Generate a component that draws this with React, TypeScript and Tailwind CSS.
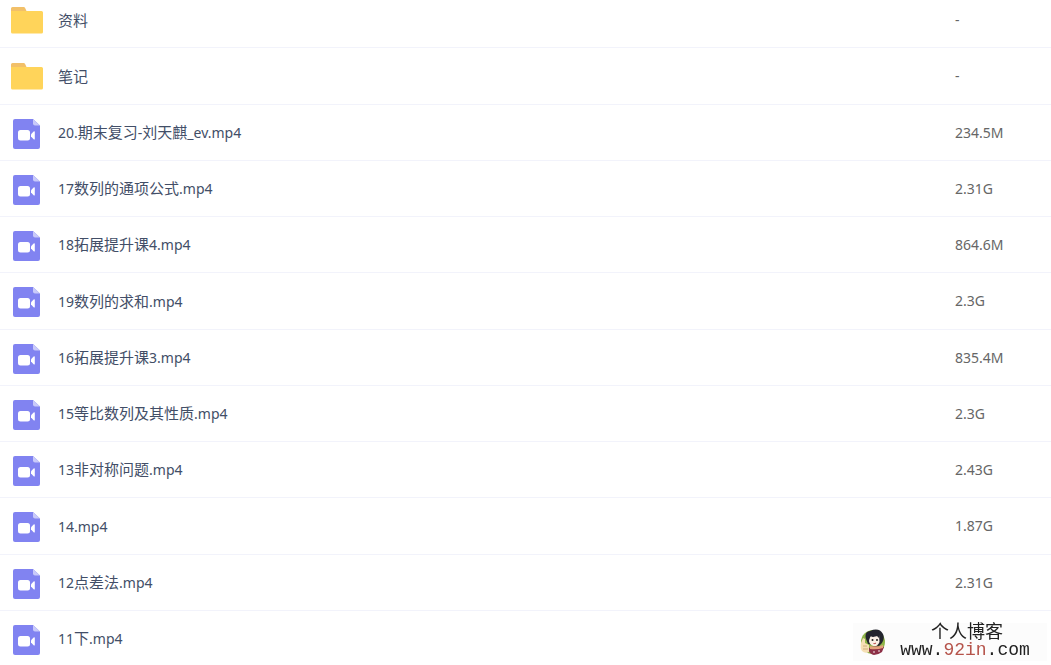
import React from 'react';

type FileItem = {
  name: string;
  size: string;
  folder?: boolean;
};

const files: FileItem[] = [
  { name: '资料', size: '-', folder: true },
  { name: '笔记', size: '-', folder: true },
  { name: '20.期末复习-刘天麒_ev.mp4', size: '234.5M' },
  { name: '17数列的通项公式.mp4', size: '2.31G' },
  { name: '18拓展提升课4.mp4', size: '864.6M' },
  { name: '19数列的求和.mp4', size: '2.3G' },
  { name: '16拓展提升课3.mp4', size: '835.4M' },
  { name: '15等比数列及其性质.mp4', size: '2.3G' },
  { name: '13非对称问题.mp4', size: '2.43G' },
  { name: '14.mp4', size: '1.87G' },
  { name: '12点差法.mp4', size: '2.31G' },
  { name: '11下.mp4', size: '' },
];

const FolderIcon = () => (
  <svg className="h-8 w-8 shrink-0" viewBox="0 0 32 32" aria-hidden="true">
    <path d="M0 10V4.5A1.5 1.5 0 0 1 1.5 3h11.2a1.5 1.5 0 0 1 1.3.8L15.5 7v3z" fill="#f2c069" />
    <path d="M0 7h30.5A1.5 1.5 0 0 1 32 8.5V28a1.5 1.5 0 0 1-1.5 1.5h-29A1.5 1.5 0 0 1 0 28z" fill="#ffd45a" />
  </svg>
);

const VideoIcon = () => (
  <svg className="h-8 w-8 shrink-0" viewBox="0 0 32 32" aria-hidden="true">
    <path d="M4 2h18l7 6.500V30a2 2 0 0 1-2 2H4a2 2 0 0 1-2-2V4a2 2 0 0 1 2-2z" fill="#8183f1" />
    <path d="M22 2l7 6.500h-5a2 2 0 0 1-2-2z" fill="#c9caf9" />
    <rect x="7" y="13" width="12" height="10.5" rx="2.5" fill="#fff" />
    <path d="M20 17.2l2.600-2.700q1.200-.8 1.200.6v6.600q0 1.400-1.200.6L20 19.500z" fill="#fff" />
  </svg>
);

// Latin runs are set one step smaller than the Chinese ones
const FileName = ({ name }: { name: string }) => (
  <>
    {name.split(/([\x20-\x7e]+)/).filter(Boolean).map((part, index) => (
      <span key={index} className={/^[\x20-\x7e]/.test(part) ? 'text-sm' : 'text-[15px]'}>
        {part}
      </span>
    ))}
  </>
);

const BlogMark = () => (
  <div className="fixed right-1 bottom-1 flex h-[38px] w-[194px] items-center bg-[#fcfcfc] pr-1 pl-1.5">
    <svg className="h-7 w-7 shrink-0" viewBox="0 0 28 28" aria-hidden="true">
      <circle cx="14" cy="14" r="12" fill="#8fb548" />
      <path d="M7 11Q5 4 11 3q9-4 13 3 2 5-1 9l-3 3-11-2z" fill="#24252e" />
      <path d="M11 8q5 2 9-1l.5 7q-2 5-6 4-4-1-4.500-5z" fill="#faf0e6" />
      <path d="M9 9l3-5 8 1v5l-3-3-3 2-2-1-2 3z" fill="#24252e" />
      <circle cx="13.500" cy="12" r="1" fill="#222" />
      <circle cx="18" cy="12" r="1" fill="#222" />
      <path d="M14.500 15.500q1.500.5 2.500-.5" stroke="#b44" fill="none" />
      <path d="M10 20q5-3 15-1l-2 5q-4 3-8 3-4-1-5-4z" fill="#8d3047" />
      <path d="M11 18q6 2 13-1v3q-6 2-13 1z" fill="#e3a27b" />
      <path d="M2 15l2-5 2 1v4l4 2v7q-4 2-7-1-2-3-1-8z" fill="#f5dfb4" />
      <path d="M4 18h4M4 21h5" stroke="#d1ae7c" />
      <circle cx="15" cy="24" r=".8" fill="#fff" />
      <circle cx="20" cy="23" r=".8" fill="#fff" />
    </svg>
    <div className="flex flex-1 flex-col items-center text-[#222]">
      <span className="pl-1 font-['Noto_Sans_CJK_SC',sans-serif] text-lg leading-4">个人博客</span>
      <span className="font-['Liberation_Mono',monospace] text-lg leading-6">
        www.<span className="text-[#b5534a]">92in</span>.com
      </span>
    </div>
  </div>
);

const App = () => {
  return (
    <div className="h-screen overflow-hidden bg-white font-['Noto_Sans','Noto_Sans_CJK_SC',sans-serif]">
      <table className="-mt-2 w-full table-fixed border-separate border-spacing-0">
        <tbody>
          {files.map((file) => (
            <tr key={file.name} className="h-14 nth-[4n+2]:h-[57px]">
              <td className="border-b border-[#f2f3fb] p-0 pl-[11px]">
                <div className="flex items-center">
                  {file.folder ? <FolderIcon /> : <VideoIcon />}
                  <a href="#" className="ml-[15px] leading-5 whitespace-nowrap text-[#424e67]">
                    <FileName name={file.name} />
                  </a>
                </div>
              </td>
              <td className="w-24 border-b border-[#f2f3fb] p-0 text-sm text-[#666]">{file.size}</td>
            </tr>
          ))}
        </tbody>
      </table>
      <BlogMark />
    </div>
  );
};

export default App;
